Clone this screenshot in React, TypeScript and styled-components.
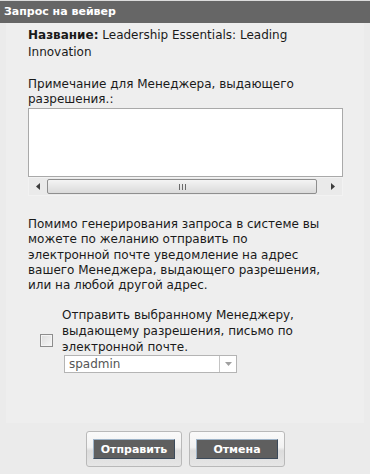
import styled, { createGlobalStyle } from "styled-components";

const GlobalStyle = createGlobalStyle`
  html, body {
    margin: 0;
    padding: 0;
    background: #ebebeb;
  }
  body {
    font-family: "DejaVu Sans", Verdana, sans-serif;
    color: #1a1a1a;
  }
`;

const Dialog = styled.div`
  width: 370px;
  height: 474px;
  display: flex;
  flex-direction: column;
  background: #ebebeb;
`;

const TitleBar = styled.div`
  height: 22px;
  line-height: 22px;
  border-top: 1px solid #dcdcdc;
  background: #666666;
  color: #ffffff;
  font-weight: bold;
  font-size: 11px;
  padding-left: 4px;
`;

const Panel = styled.div`
  margin: 0 6px;
  height: 400px;
  box-sizing: border-box;
  background: #eeeeee;
  padding: 4px 15px 0 22px;
  display: flex;
  flex-direction: column;
`;

const NameLine = styled.div`
  font-size: 12px;
  line-height: 17px;
`;

const Label = styled.div<{ $gap?: number }>`
  font-size: 12px;
  line-height: 15px;
  margin-top: ${(p) => p.$gap ?? 0}px;
`;

const NoteArea = styled.textarea`
  display: block;
  width: 315px;
  height: 69px;
  box-sizing: border-box;
  margin: 1px 0 0;
  border: 1px solid #a9a9a9;
  background: #ffffff;
  resize: none;
  font-family: inherit;
`;

const HScroll = styled.div`
  width: 315px;
  height: 19px;
  box-sizing: border-box;
  display: flex;
  align-items: center;
  background: #eaeaea;
  border: 1px solid #f2f2f2;
`;

const ScrollArrow = styled.div`
  width: 18px;
  display: flex;
  justify-content: center;
  align-items: center;
`;

const Thumb = styled.div`
  flex: 1;
  height: 15px;
  box-sizing: border-box;
  border: 1px solid #8e8e8e;
  border-radius: 2px;
  background: linear-gradient(#f4f4f4, #dadada);
  display: flex;
  justify-content: center;
  align-items: center;
  margin-right: 7px;
`;

const Grip = styled.div`
  display: flex;
  gap: 2px;
  span {
    width: 1px;
    height: 6px;
    background: #6a6a6a;
  }
`;

const Paragraph = styled.p`
  margin: 21px 0 0;
  font-size: 12px;
  line-height: 15.3px;
  white-space: nowrap;
`;

const MailRow = styled.div`
  margin-top: 14px;
  display: flex;
  align-items: center;
  padding-left: 12px;
`;

const Check = styled.span`
  width: 11px;
  height: 11px;
  border: 1px solid #8d8d8d;
  background: linear-gradient(135deg, #dcdcdc, #f7f7f7);
  box-shadow: inset 0 0 0 1px #f4f4f4;
  flex: none;
`;

const MailBody = styled.div`
  margin-left: 9px;
`;

const MailLabel = styled.div`
  font-size: 12px;
  line-height: 16px;
`;

const Select = styled.div`
  margin: 0 0 0 2px;
  width: 173px;
  height: 18px;
  box-sizing: border-box;
  border: 1px solid #b4b4b4;
  background: #ffffff;
  display: flex;
  align-items: stretch;
`;

const SelectValue = styled.div`
  flex: 1;
  padding-left: 4px;
  font-size: 12px;
  line-height: 16px;
  color: #555555;
`;

const SelectArrow = styled.div`
  width: 16px;
  border-left: 1px solid #c4c4c4;
  display: flex;
  justify-content: center;
  align-items: center;
`;

const Footer = styled.div`
  display: flex;
  justify-content: center;
  gap: 7px;
  padding-top: 8px;
  padding-left: 1px;
`;

const ButtonFrame = styled.div`
  width: 96px;
  height: 36px;
  box-sizing: border-box;
  border: 1px solid #b9b9b9;
  border-radius: 3px;
  background: linear-gradient(#fafafa 0%, #f2f2f2 45%, #dcdcdc 55%, #e6e6e6 100%);
  display: flex;
  justify-content: center;
  align-items: center;
`;

const Button = styled.button`
  width: 82px;
  height: 20px;
  box-sizing: border-box;
  padding: 0;
  border: 1px solid #3c4a5a;
  border-top-color: #9fb4c8;
  border-left-color: #9fb4c8;
  background: #5f5f5f;
  color: #ffffff;
  font-family: "DejaVu Sans", Verdana, sans-serif;
  font-weight: bold;
  font-size: 11px;
  cursor: pointer;
`;

export default function App() {
  return (
    <>
      <GlobalStyle />
      <Dialog>
        <TitleBar>Запрос на вейвер</TitleBar>
        <Panel>
          <NameLine>
            <b>Название:</b> Leadership Essentials: Leading Innovation
          </NameLine>
          <Label $gap={16}>Примечание для Менеджера, выдающего разрешения.:</Label>
          <NoteArea />
          <HScroll>
            <ScrollArrow>
              <svg width="4" height="7" viewBox="0 0 4 7">
                <path d="M4 0 L0 3.5 L4 7 Z" fill="#3c3c3c" />
              </svg>
            </ScrollArrow>
            <Thumb>
              <Grip>
                <span />
                <span />
                <span />
              </Grip>
            </Thumb>
            <ScrollArrow>
              <svg width="4" height="7" viewBox="0 0 4 7">
                <path d="M0 0 L4 3.5 L0 7 Z" fill="#3c3c3c" />
              </svg>
            </ScrollArrow>
          </HScroll>
          <Paragraph>
            Помимо генерирования запроса в системе вы
            <br />
            можете по желанию отправить по
            <br />
            электронной почте уведомление на адрес
            <br />
            вашего Менеджера, выдающего разрешения,
            <br />
            или на любой другой адрес.
          </Paragraph>
          <MailRow>
            <Check />
            <MailBody>
              <MailLabel>
                Отправить выбранному Менеджеру, выдающему разрешения, письмо по
                электронной почте.
              </MailLabel>
              <Select>
                <SelectValue>spadmin</SelectValue>
                <SelectArrow>
                  <svg width="7" height="4" viewBox="0 0 7 4">
                    <path d="M0 0 L7 0 L3.5 4 Z" fill="#a0a0a0" />
                  </svg>
                </SelectArrow>
              </Select>
            </MailBody>
          </MailRow>
        </Panel>
        <Footer>
          <ButtonFrame>
            <Button>Отправить</Button>
          </ButtonFrame>
          <ButtonFrame>
            <Button>Отмена</Button>
          </ButtonFrame>
        </Footer>
      </Dialog>
    </>
  );
}
